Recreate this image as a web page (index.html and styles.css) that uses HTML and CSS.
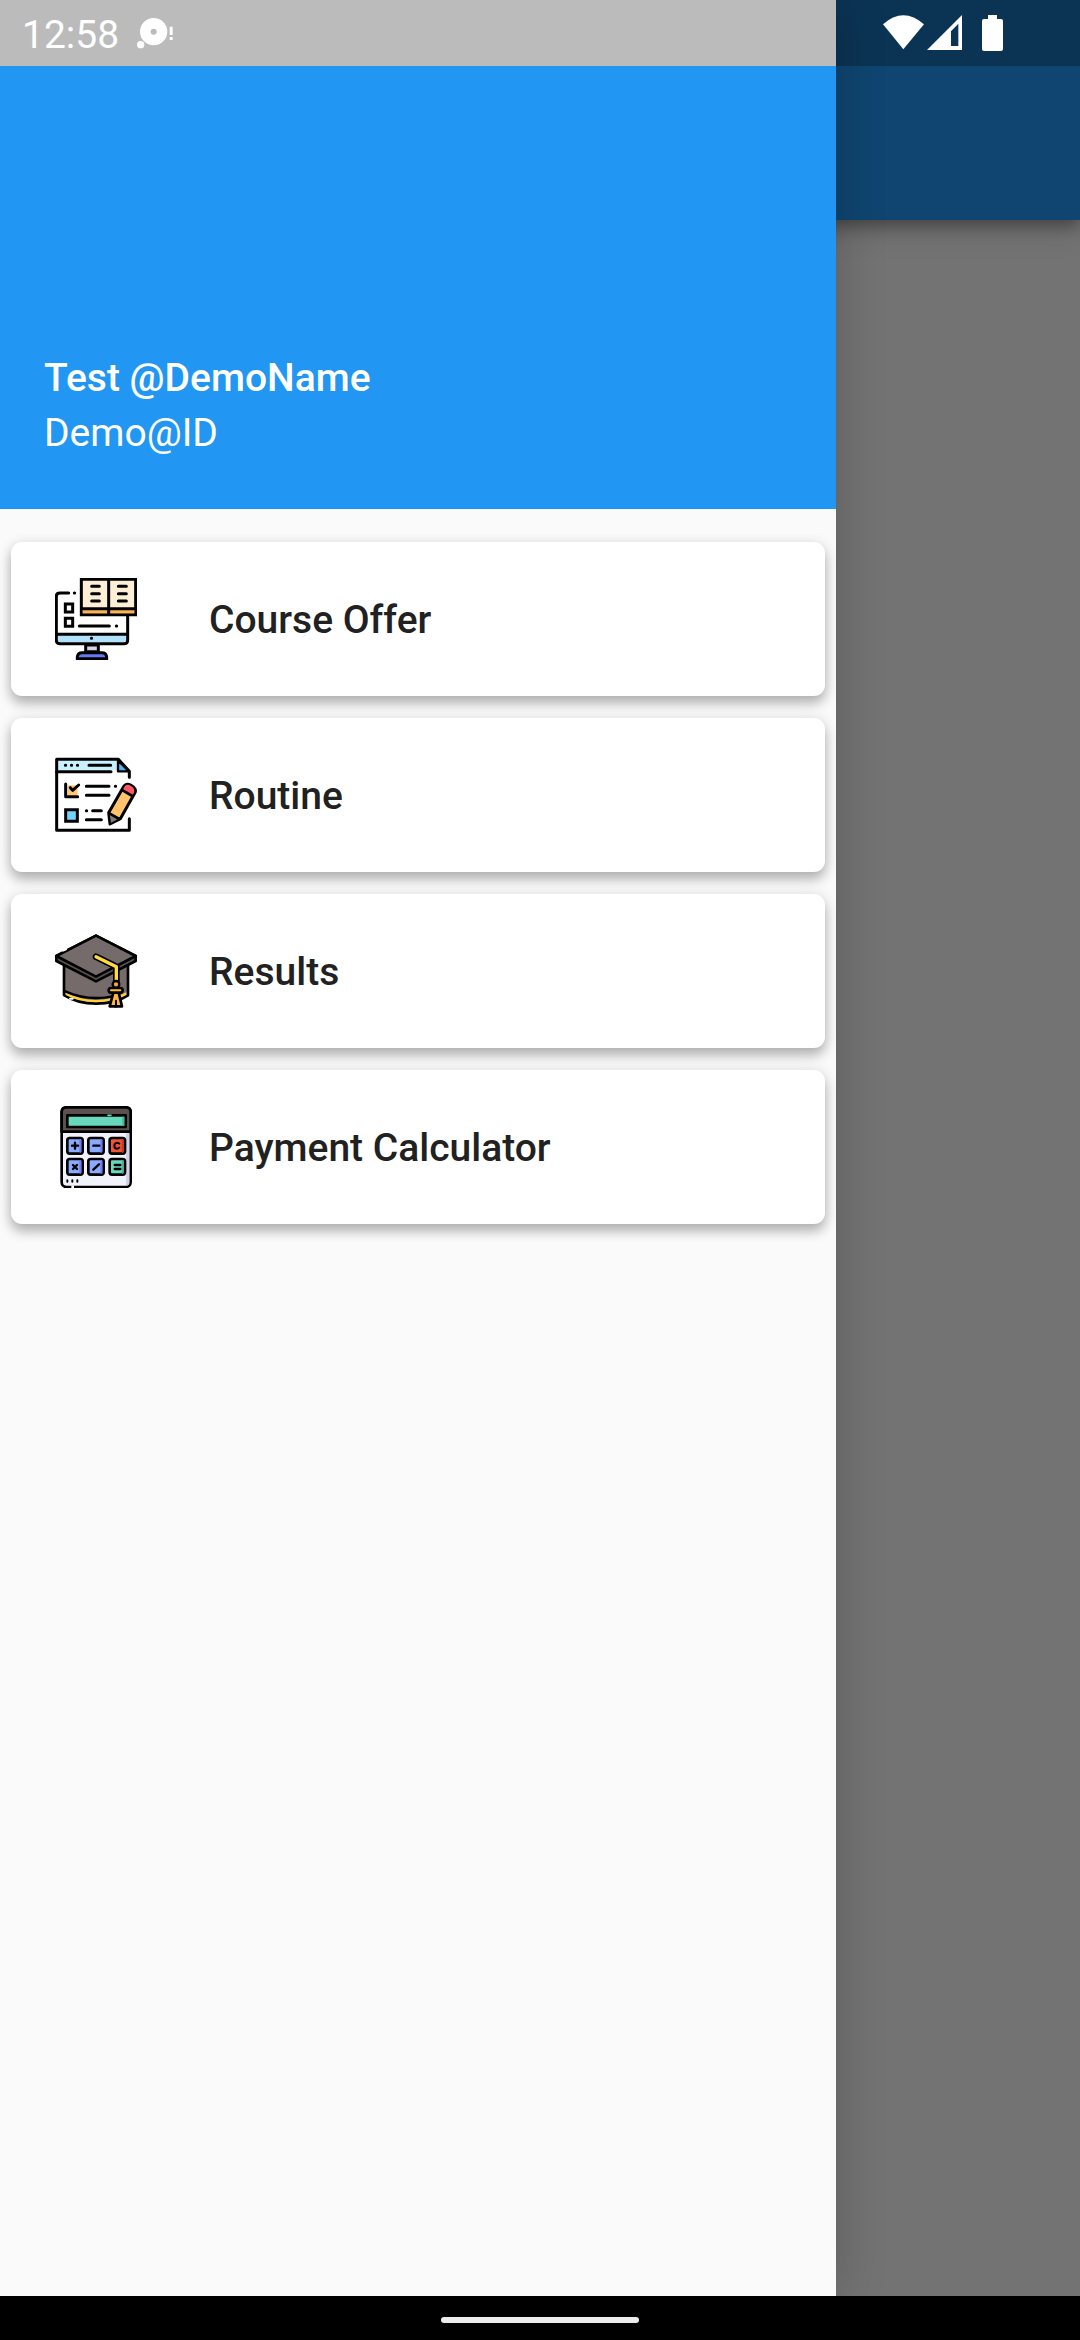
FILE: index.html
```html
<!DOCTYPE html>
<html lang="en">
<head>
<meta charset="utf-8">
<meta name="viewport" content="width=device-width, initial-scale=1">
<title>Student Portal</title>
<link rel="stylesheet" href="styles.css">
</head>
<body>
<div class="screen">
  <main class="page">
    <div class="app-bar"></div>
  </main>
  <div class="scrim"></div>

  <aside class="drawer">
    <header class="account">
      <strong class="account-name">Test @DemoName</strong>
      <span class="account-id">Demo@ID</span>
    </header>
    <nav class="menu">
      <a class="card" href="#course-offer">
        <svg class="card-icon" viewBox="45 39 246 246" fill="none" stroke="#000" stroke-width="9" stroke-linecap="round" aria-hidden="true">
          <path d="M86 84H60Q49 84 49 94V225Q49 236 60 236H254Q263 236 263 225V150"/>
          <path d="M54 209H258V225Q258 231 252 231H60Q54 231 54 225Z" fill="#b0e1fd" stroke="none"/>
          <path d="M50 208H262"/>
          <path d="M137 240H175V260H137Z" fill="#d5d3e4" stroke-linecap="butt"/>
          <path d="M112 281V275Q114 263 126 263H186Q198 263 200 275V281Z" fill="#6679f6"/>
          <path d="M124 43H287V149H124Z" fill="#ffeed6"/>
          <path d="M128 134H283V145H128Z" fill="#fdb34f" stroke="none"/>
          <path d="M128 131H283M206 46V148" stroke-width="9"/>
          <path d="M155 64H178M155 86H178M155 108H178M235 64H259M235 86H259M235 108H259"/>
          <path d="M76 117H98V141H76ZM76 160H98V184H76Z"/>
          <path d="M118 183H208M229 183H230M103 84H104M154 220H155"/>
        </svg>
        <span class="card-label">Course Offer</span>
      </a>
      <a class="card" href="#routine">
        <svg class="card-icon" viewBox="45 42 246 246" fill="none" stroke="#000" stroke-width="9" stroke-linecap="round" stroke-linejoin="round" aria-hidden="true">
          <path d="M53 62H232V91H53Z" fill="#c9f0ff" stroke="none"/>
          <path d="M268 112V94L235 58H50V271H268V236"/>
          <path d="M234 61V94H267Z" fill="#48b7f3" stroke-width="7"/>
          <path d="M50 95H213M147 76H212M76 76H77M94 76H95M112 76H113"/>
          <path d="M83 136H112V166H83Z" fill="#ffc477" stroke="none"/>
          <path d="M77 132V170H113M91 143L98 151L116 135"/>
          <path d="M77 209H112V244H77Z" fill="#73d3ff" stroke-linejoin="miter"/>
          <path d="M139 139H207M139 166H207M226 139H227M139 212H140M158 212H184M139 239H184"/>
          <path d="M206 218L249 143Q258 128 273 136Q292 146 284 160L241 236L210 252Z" fill="#ffc36c"/>
          <path d="M249 148L255 138Q262 131 272 137Q286 145 282 158L275 167Z" fill="#ff5968" stroke="none"/>
          <path d="M209 222L236 236L213 248Z" fill="#817a84" stroke="none"/>
          <path d="M248 151L277 168M208 220L238 237" stroke-width="8"/>
        </svg>
        <span class="card-label">Routine</span>
      </a>
      <a class="card" href="#results">
        <svg class="card-icon" viewBox="45 45 246 246" fill="none" stroke="#000" stroke-width="8" stroke-linecap="round" stroke-linejoin="round" aria-hidden="true">
          <path d="M72 144V240Q114 266 168 266Q226 266 264 241V144Z" fill="#766b6b"/>
          <path d="M77 232Q120 255 168 255Q216 255 259 232V240Q220 262 168 262Q116 262 77 240Z" fill="#ffd23b" stroke="none"/>
          <path d="M76 229Q120 249 168 249Q198 249 213 245" stroke-width="7"/>
          <path d="M49 123L168 62L287 123V138L168 199L49 138Z" fill="#5a5151"/>
          <path d="M49 123L168 62L287 123L168 185Z" fill="#766b6b"/>
          <path d="M168 125L229 155V200" stroke-width="20"/>
          <path d="M168 125L229 155V200" stroke="#ffdc3c" stroke-width="10"/>
          <path d="M220 233H236L246 274H209Z" fill="#ffb640"/>
          <path d="M228 257V275" stroke-width="6"/>
          <rect x="206" y="219" width="42" height="14" rx="7" fill="#ffbe35"/>
          <circle cx="228" cy="208" r="10" fill="#ff9f35" stroke-width="7"/>
          <path d="M69 107L78 103M90 251H98" stroke="#fff" stroke-width="6"/>
        </svg>
        <span class="card-label">Results</span>
      </a>
      <a class="card" href="#payment-calculator">
        <svg class="card-icon" viewBox="45 48 246 246" fill="none" stroke="#000" stroke-width="8" stroke-linecap="round" stroke-linejoin="round" aria-hidden="true">
          <rect x="65" y="52" width="207" height="239" rx="14" fill="#f1f3fc"/>
          <path d="M258 130H268V278Q268 287 258 287Z" fill="#cfd2e8" stroke="none"/>
          <path d="M65 125V66Q65 52 79 52H258Q272 52 272 66V125Z" fill="#5b5151"/>
          <path d="M82 76H257V111H82Z" fill="#68d8bd"/>
          <path d="M247 80H253V107H247Z" fill="#43b69b" stroke="none"/>
          <path d="M204 76H213" stroke="#68d8bd" stroke-width="5"/>
          <rect x="82" y="144" width="46" height="47" rx="7" fill="#88aaff"/>
          <rect x="145" y="144" width="46" height="47" rx="7" fill="#88aaff"/>
          <rect x="209" y="144" width="46" height="47" rx="7" fill="#f55135"/>
          <rect x="82" y="207" width="46" height="47" rx="7" fill="#88aaff"/>
          <rect x="145" y="207" width="46" height="47" rx="7" fill="#88aaff"/>
          <rect x="209" y="207" width="46" height="47" rx="7" fill="#68d8bd"/>
          <path d="M121 150V185M184 150V185M121 213V248M184 213V248" stroke="#7478f5" stroke-width="6"/>
          <path d="M248 150V185" stroke="#cf3828" stroke-width="6"/>
          <path d="M248 213V248" stroke="#49b39c" stroke-width="6"/>
          <path d="M96 167H114M105 158V176M160 167H178M99 225L111 237M111 225L99 237M160 239L177 223M224 225H241M224 237H241" stroke-width="7"/>
          <path d="M238 161Q235 158 231 158Q223 159 223 167Q223 176 231 176Q235 176 238 173" stroke-width="6"/>
          <path d="M82 271V275M97 271V275M112 271V275" stroke-width="6"/>
          <path d="M94 291H102" stroke="#fff" stroke-width="9" stroke-linecap="butt"/>
        </svg>
        <span class="card-label">Payment Calculator</span>
      </a>
    </nav>
  </aside>

  <div class="status-bar">
    <time class="clock">12:58</time>
    <svg class="notice" width="36" height="31" viewBox="412 54 108 93" fill="#fff" aria-hidden="true">
      <path fill-rule="evenodd" d="M462 54a41 41 0 1 0 0 82a41 41 0 1 0 0-82zM462 86a9 9 0 1 1 0 18a9 9 0 1 1 0-18z"/>
      <circle cx="423" cy="134" r="11"/>
      <path d="M510 80H519V105H510ZM510 111H519V120H510Z"/>
    </svg>
    <div class="signals">
      <svg width="41" height="36" viewBox="189 45 123 108" fill="#fff" aria-hidden="true">
        <path d="M189 73Q250 19 312 73L250 148Z"/>
      </svg>
      <svg width="35" height="36" viewBox="321 45 105 108" fill="#fff" aria-hidden="true">
        <path fill-rule="evenodd" d="M321 150L426 45V150ZM393 94V138H415V71Z"/>
      </svg>
      <svg class="battery" width="21" height="36" viewBox="486 45 63 108" fill="#fff" aria-hidden="true">
        <path d="M504 45H531V57H543Q549 57 549 63V147Q549 153 543 153H492Q486 153 486 147V63Q486 57 492 57H504Z"/>
      </svg>
    </div>
  </div>

  <footer class="system-nav"><div class="home-handle"></div></footer>
</div>
</body>
</html>
```
FILE: styles.css
```css
* {
  box-sizing: border-box;
}

body {
  margin: 0;
  font-family: Roboto, "Liberation Sans", sans-serif;
  font-size: 39px;
  line-height: 44px;
}

/* Every layer shares the same grid; the bars take the first and last rows. */
.screen {
  display: grid;
  grid-template-columns: minmax(0, 1fr);
  grid-template-rows: 66px 1fr 44px;
  min-height: 100vh;
  overflow: hidden;
}

.page,
.scrim,
.drawer {
  grid-column: 1;
  grid-row: 1 / 3;
}

.page {
  background: #fafafa;
}

.app-bar {
  height: 220px;
  background: #2196f3;
  box-shadow: 0 6px 14px rgba(0, 0, 0, 0.3), 0 10px 28px rgba(0, 0, 0, 0.16);
}

.scrim {
  background: rgba(0, 0, 0, 0.54);
}

.drawer {
  width: 836px;
  max-width: 100%;
  padding-top: 66px;
  background: #fafafa;
  box-shadow: 0 0 48px rgba(0, 0, 0, 0.2);
}

.account {
  display: flex;
  flex-direction: column;
  justify-content: flex-end;
  gap: 11px;
  height: 443px;
  padding: 44px;
  padding-bottom: 54px;
  background: #2196f3;
  color: #fff;
}

.account-name {
  font-weight: 500;
}

.menu {
  display: flex;
  flex-direction: column;
  gap: 22px;
  padding: 33px 11px;
}

.card {
  display: flex;
  align-items: center;
  gap: 72px;
  height: 154px;
  padding: 0 44px;
  border-radius: 11px;
  background: #fff;
  box-shadow: 0 8px 12px rgba(0, 0, 0, 0.22), 0 2px 14px rgba(0, 0, 0, 0.14);
  color: #212121;
  font-weight: 500;
  text-decoration: none;
}

.card-icon {
  flex: none;
  width: 82px;
  height: 82px;
}

.card-label {
  padding-top: 2px;
}

.status-bar {
  grid-column: 1;
  grid-row: 1;
  display: flex;
  align-items: center;
  gap: 18px;
  padding: 0 77px 0 22px;
  background: rgba(0, 0, 0, 0.25);
  color: #fff;
}

.clock {
  padding-top: 4px;
}

.signals {
  display: flex;
  gap: 3px;
  margin-left: auto;
}

.battery {
  margin-left: 17px;
}

.system-nav {
  grid-column: 1;
  grid-row: 3;
  display: flex;
  align-items: center;
  justify-content: center;
  z-index: 1;
  background: #000;
}

.home-handle {
  width: 198px;
  height: 6px;
  margin-top: 4px;
  border-radius: 3px;
  background: #ececec;
}
```
